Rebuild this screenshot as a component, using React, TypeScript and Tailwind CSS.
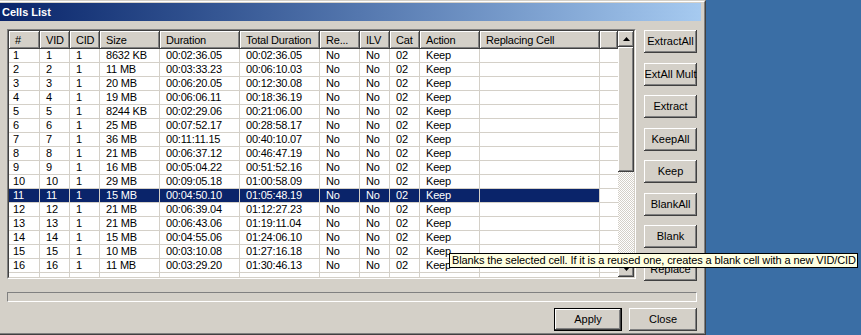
import React from "react";

const cols = [
  { key: "n", label: "#", w: "w-[31px]", pad: "pl-[4px]" },
  { key: "vid", label: "VID", w: "w-[30px]", pad: "pl-[6px]" },
  { key: "cid", label: "CID", w: "w-[30px]", pad: "pl-[6px]" },
  { key: "size", label: "Size", w: "w-[60px]", pad: "pl-[6px]" },
  { key: "dur", label: "Duration", w: "w-[80px]", pad: "pl-[6px]" },
  { key: "total", label: "Total Duration", w: "w-[80px]", pad: "pl-[6px]" },
  { key: "re", label: "Re...", w: "w-[40px]", pad: "pl-[6px]" },
  { key: "ilv", label: "ILV", w: "w-[30px]", pad: "pl-[6px]" },
  { key: "cat", label: "Cat", w: "w-[30px]", pad: "pl-[6px]" },
  { key: "action", label: "Action", w: "w-[60px]", pad: "pl-[6px]" },
  { key: "repl", label: "Replacing Cell", w: "w-[120px]", pad: "pl-[6px]" },
];

const raw: [string, string, string][] = [
  ["8632 KB", "00:02:36.05", "00:02:36.05"],
  ["11 MB", "00:03:33.23", "00:06:10.03"],
  ["20 MB", "00:06:20.05", "00:12:30.08"],
  ["19 MB", "00:06:06.11", "00:18:36.19"],
  ["8244 KB", "00:02:29.06", "00:21:06.00"],
  ["25 MB", "00:07:52.17", "00:28:58.17"],
  ["36 MB", "00:11:11.15", "00:40:10.07"],
  ["21 MB", "00:06:37.12", "00:46:47.19"],
  ["16 MB", "00:05:04.22", "00:51:52.16"],
  ["29 MB", "00:09:05.18", "01:00:58.09"],
  ["15 MB", "00:04:50.10", "01:05:48.19"],
  ["21 MB", "00:06:39.04", "01:12:27.23"],
  ["21 MB", "00:06:43.06", "01:19:11.04"],
  ["15 MB", "00:04:55.06", "01:24:06.10"],
  ["10 MB", "00:03:10.08", "01:27:16.18"],
  ["11 MB", "00:03:29.20", "01:30:46.13"],
];

const rows = raw.map(([size, dur, total], i) => ({
  n: String(i + 1),
  vid: String(i + 1),
  cid: "1",
  size,
  dur,
  total,
  re: "No",
  ilv: "No",
  cat: "02",
  action: "Keep",
  repl: "",
}));

const SELECTED = 10;

const raised =
  "bg-[#d4d0c8] shadow-[inset_-1px_-1px_#404040,inset_1px_1px_#ffffff,inset_-2px_-2px_#808080,inset_2px_2px_#d4d0c8]";

function Button({ label, className = "" }: { label: string; className?: string }) {
  return (
    <div
      className={`${raised} h-[23px] flex items-center justify-center overflow-hidden whitespace-nowrap text-[11px] text-black ${className}`}
    >
      {label}
    </div>
  );
}

function Arrow({ down }: { down?: boolean }) {
  return (
    <div className={`${raised} h-[16px] flex items-center justify-center`}>
      <svg width="7" height="4" viewBox="0 0 7 4">
        {down ? <polygon points="0,0 7,0 3.5,4" fill="#000" /> : <polygon points="3.5,0 7,4 0,4" fill="#000" />}
      </svg>
    </div>
  );
}

function Scrollbar() {
  return (
    <div className="w-[16px] flex flex-col shrink-0">
      <Arrow />
      <div className={`${raised} h-[125px]`} />
      <div className="flex-1 bg-[repeating-conic-gradient(#ffffff_0%_25%,#d4d0c8_0%_50%)] bg-[length:2px_2px]" />
      <Arrow down />
    </div>
  );
}

function ListView() {
  return (
    <div className="w-[629px] h-[250px] border border-t-[#808080] border-l-[#808080] border-b-white border-r-white shrink-0">
      <div className="h-full flex bg-white overflow-hidden border border-t-[#404040] border-l-[#404040] border-b-[#d4d0c8] border-r-[#d4d0c8]">
        <div className="flex-1 flex flex-col overflow-hidden">
          <div className="flex h-[18px] shrink-0">
            {cols.map((c) => (
              <div
                key={c.key}
                className={`${c.w} ${raised} pl-[6px] flex items-center text-[11px] tracking-[-0.2px] whitespace-nowrap overflow-hidden shrink-0`}
              >
                {c.label}
              </div>
            ))}
            <div className={`flex-1 ${raised}`} />
          </div>
          {rows.map((r, i) => (
            <div key={i} className="flex h-[14px] shrink-0 border-b border-[#d4d0c8]">
              {cols.map((c) => (
                <div
                  key={c.key}
                  className={`${c.w} ${c.pad} shrink-0 border-r border-[#d4d0c8] text-[11px] leading-[13px] tracking-[-0.2px] whitespace-nowrap overflow-hidden ${
                    i === SELECTED ? "bg-[#0a246a] text-white" : "text-black"
                  }`}
                >
                  {(r as Record<string, string>)[c.key]}
                </div>
              ))}
              <div className="flex-1" />
            </div>
          ))}
          <div className="flex h-[14px] shrink-0">
            {cols.map((c) => (
              <div key={c.key} className={`${c.w} shrink-0 border-r border-[#d4d0c8]`} />
            ))}
          </div>
        </div>
        <Scrollbar />
      </div>
    </div>
  );
}

export default function App() {
  const side = ["ExtractAll", "ExtAll Mult", "Extract", "KeepAll", "Keep", "BlankAll", "Blank", "Replace"];
  const gaps = ["", "mt-[10px]", "mt-[9px]", "mt-[10px]", "mt-[9px]", "mt-[10px]", "mt-[9px]", "mt-[10px]"];
  return (
    <div className="relative flex w-[861px] h-[335px] overflow-hidden bg-[#3a6ea5] font-['Liberation_Sans',Arial,sans-serif]">
      <div className="w-[706px] h-full shrink-0 bg-[#d4d0c8] border-t border-t-[#d4d0c8] border-r border-r-[#404040] border-b border-b-[#404040]">
        <div className="h-full flex flex-col pt-px pr-[3px] pb-px border-t border-t-white border-r border-r-[#808080] border-b border-b-[#808080]">
          <div className="h-[18px] shrink-0 flex items-center pl-[2px] bg-gradient-to-r from-[#0a246a] to-[#a6caf0]">
            <span className="text-white font-bold text-[11px]">Cells List</span>
          </div>
          <div className="flex-1 flex flex-col pl-[7px] pt-[8px]">
            <div className="flex">
              <ListView />
              <div className="ml-[8px] pt-px flex flex-col w-[53px]">
                {side.map((s, i) => (
                  <Button key={s} label={s} className={gaps[i]} />
                ))}
              </div>
            </div>
            <div className="mt-[11px] w-[690px] h-[10px] border border-t-[#808080] border-l-[#808080] border-b-white border-r-white" />
            <div className="mt-[6px] w-[690px] flex justify-end gap-[7px]">
              <div className="w-[68px] h-[23px] border border-black">
                <Button label="Apply" className="h-full" />
              </div>
              <Button label="Close" className="w-[68px]" />
            </div>
          </div>
        </div>
      </div>
      <div className="absolute left-[449px] top-[253px] w-[409px] h-[15px] bg-[#ffffe1] border border-black pl-[2px] text-[11px] leading-[13px] tracking-[-0.1px] text-black whitespace-nowrap overflow-hidden">
        Blanks the selected cell. If it is a reused one, creates a blank cell with a new VID/CID
      </div>
    </div>
  );
}
